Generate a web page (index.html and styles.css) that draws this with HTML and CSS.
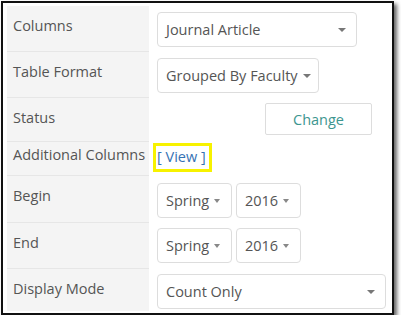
FILE: index.html
```html
<!DOCTYPE html>
<html lang="en">
<head>
	<meta charset="UTF-8">
	<title>Report Options</title>
	<link rel="stylesheet" href="styles.css">
</head>
<body>
	<div class="marco">
		<div class="fila alto46">
			<div class="etiqueta">Columns</div>
			<div class="valor">
				<div class="combo ancho200"><span>Journal Article</span><i class="flecha"></i></div>
			</div>
		</div>
		<div class="fila alto46">
			<div class="etiqueta">Table Format</div>
			<div class="valor">
				<div class="combo ajustado"><span>Grouped By Faculty</span><i class="flecha"></i></div>
			</div>
		</div>
		<div class="fila alto44">
			<div class="etiqueta">Status</div>
			<div class="valor valorBoton">
				<button class="btnCambio">Change</button>
			</div>
		</div>
		<div class="fila alto34">
			<div class="etiqueta etiquetaCorta">Additional Columns</div>
			<div class="valor valorEnlace">
				<span class="resaltado"><a href="#" class="enlace">[ View ]</a></span>
			</div>
		</div>
		<div class="fila alto47">
			<div class="etiqueta">Begin</div>
			<div class="valor valorPar">
				<div class="combo ancho75"><span>Spring</span><i class="flecha chica"></i></div>
				<div class="combo ancho65"><span>2016</span><i class="flecha chica"></i></div>
			</div>
		</div>
		<div class="fila alto46">
			<div class="etiqueta">End</div>
			<div class="valor valorFin">
				<div class="combo ancho75"><span>Spring</span><i class="flecha chica"></i></div>
				<div class="combo ancho65"><span>2016</span><i class="flecha chica"></i></div>
			</div>
		</div>
		<div class="fila alto41">
			<div class="etiqueta">Display Mode</div>
			<div class="valor valorFin">
				<div class="combo ancho229"><span>Count Only</span><i class="flecha"></i></div>
			</div>
		</div>
	</div>
</body>
</html>
```

FILE: styles.css
```css
*{
	margin:0;
	padding:0;
	box-sizing: border-box;
}
body{
	font-family: "Open Sans", "Liberation Sans", sans-serif;
	font-size: 14.5px;
	color: #555;
	background: #fff;
}
.marco{
	margin: 1px 0 0 1px;
	width: 393px;
	height: 314px;
	padding: 3px 2px 0 4px;
	border: 2px solid #111;
	background: #fff;
	box-shadow: 3px 3px 4px rgba(0,0,0,.6);
}
.fila{
	display: flex;
}
.alto46{ height: 46px; }
.alto44{ height: 44px; }
.alto34{ height: 34px; }
.alto47{ height: 47px; }
.alto41{ height: 42px; }
.etiqueta{
	width: 142px;
	flex-shrink: 0;
	padding: 10px 0 0 6px;
	line-height: 20px;
	background: #f4f4f4;
	border-bottom: 1px solid #e6e6e6;
	color: #555;
}
.fila:last-child .etiqueta{
	border-bottom: none;
}
.etiqueta.etiquetaCorta{
	padding-top: 3px;
}
.valor{
	flex: 1;
	display: flex;
	gap: 4px;
	align-items: flex-start;
	padding: 6px 0 0 8px;
}
.valorBoton{ padding: 5px 0 0 116px; }
.valorEnlace{ padding: 1px 0 0 4px; }
.valorPar{ padding-top: 7px; }
.valorFin{ padding-top: 5px; }
.combo{
	display: flex;
	align-items: center;
	height: 35px;
	padding: 0 10px 0 8px;
	border: 1px solid #ddd;
	border-radius: 4px;
	background: #fff;
	color: #555;
	white-space: nowrap;
}
.ancho200{ width: 200px; }
.ancho229{ width: 229px; }
.ancho75{ width: 75px; }
.ancho65{ width: 65px; }
.ajustado{ padding-right: 7px; }
.flecha{
	margin-left: auto;
	width: 0;
	height: 0;
	border-left: 4px solid transparent;
	border-right: 4px solid transparent;
	border-top: 4px solid #777;
}
.ajustado .flecha{
	margin-left: 5px;
}
.flecha.chica{
	margin-left: 5px;
	border-left-width: 3px;
	border-right-width: 3px;
	border-top: 4px solid #888;
}
.btnCambio{
	width: 107px;
	height: 32px;
	border: 1px solid #ddd;
	border-radius: 2px;
	background: #fff;
	font-family: inherit;
	font-size: 14.5px;
	color: #3d968f;
}
.resaltado{
	display: inline-block;
	height: 29px;
	padding: 1px 3px 0 1px;
	border: 3px solid #f7f200;
}
.enlace{
	color: #3672b4;
	text-decoration: none;
	line-height: 20px;
}
```
